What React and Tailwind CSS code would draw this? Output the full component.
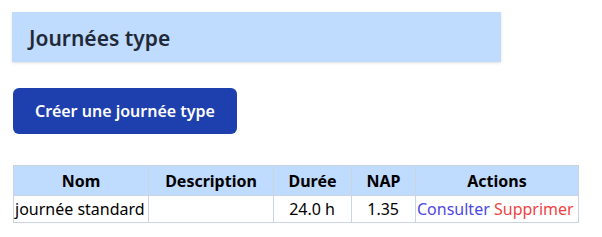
export default function App() {
  const rows = [{ nom: 'journée standard', description: '', duree: '24.0 h', nap: '1.35' }]

  return (
    <div className="bg-white min-h-screen pt-3 pl-3 font-['Segoe_UI','Noto_Sans',sans-serif]">
      <div className="w-[489px] h-[50px] bg-[#bfdbfe] shadow-sm flex items-center pl-[17px] pt-[3px]">
        <h2 className="text-[21px] font-semibold text-[#1f2937]">Journées type</h2>
      </div>

      <button className="mt-[26px] ml-px w-[224px] h-[46px] rounded-md bg-[#1e40af] text-white text-[16px] font-semibold">
        Créer une journée type
      </button>

      <table className="mt-[31px] ml-px border-collapse text-[16px] text-black">
        <thead>
          <tr className="bg-[#bfdbfe] h-[30px]">
            <th className="border border-[#cbd5e1] w-[135px] font-bold">Nom</th>
            <th className="border border-[#cbd5e1] w-[125px] font-bold">Description</th>
            <th className="border border-[#cbd5e1] w-[78px] font-bold">Durée</th>
            <th className="border border-[#cbd5e1] w-[64px] font-bold">NAP</th>
            <th className="border border-[#cbd5e1] w-[163px] font-bold">Actions</th>
          </tr>
        </thead>
        <tbody>
          {rows.map((r, i) => (
            <tr key={i} className="h-[27px]">
              <td className="border border-[#cbd5e1] px-px whitespace-nowrap">{r.nom}</td>
              <td className="border border-[#cbd5e1]">{r.description}</td>
              <td className="border border-[#cbd5e1] text-right pr-4">{r.duree}</td>
              <td className="border border-[#cbd5e1] text-right pr-4">{r.nap}</td>
              <td className="border border-[#cbd5e1] px-px whitespace-nowrap">
                <a href="#" className="text-[#4f46e5]">Consulter</a>{' '}
                <a href="#" className="text-[#ef4444]">Supprimer</a>
              </td>
            </tr>
          ))}
        </tbody>
      </table>
    </div>
  )
}
